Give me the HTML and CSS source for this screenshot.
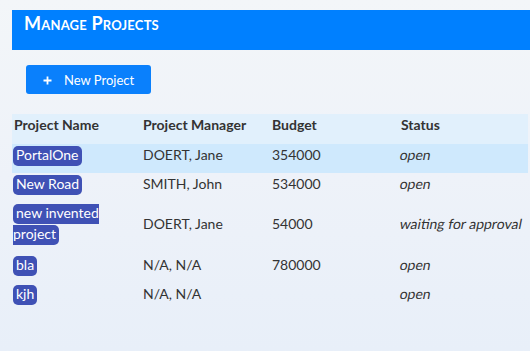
FILE: index.html
```html
<!DOCTYPE html>
<html lang="en">
<head>
<meta charset="utf-8">
<title>Manage Projects</title>
<link rel="stylesheet" href="styles.css">
</head>
<body>
<div class="page">
  <header class="title-bar">
    <h1 class="title">Manage Projects</h1>
  </header>
  <div class="toolbar">
    <button class="btn-new" type="button">
      <svg class="plus" width="9" height="9" viewBox="0 0 9 9" aria-hidden="true"><path d="M4.5 0.5v8M0.5 4.5h8" stroke="#fff" stroke-width="1.8" fill="none"/></svg>
      <span>New Project</span>
    </button>
  </div>
  <table class="projects">
    <colgroup>
      <col class="col"><col class="col"><col class="col"><col class="col">
    </colgroup>
    <thead>
      <tr><th>Project Name</th><th>Project Manager</th><th>Budget</th><th>Status</th></tr>
    </thead>
    <tbody>
      <tr class="selected"><td><span class="pill">PortalOne</span></td><td>DOERT, Jane</td><td>354000</td><td><span class="status">open</span></td></tr>
      <tr><td><span class="pill">New Road</span></td><td>SMITH, John</td><td>534000</td><td><span class="status">open</span></td></tr>
      <tr class="tall"><td><span class="pill">new invented project</span></td><td>DOERT, Jane</td><td>54000</td><td><span class="status">waiting for approval</span></td></tr>
      <tr><td><span class="pill">bla</span></td><td>N/A, N/A</td><td>780000</td><td><span class="status">open</span></td></tr>
      <tr><td><span class="pill">kjh</span></td><td>N/A, N/A</td><td></td><td><span class="status">open</span></td></tr>
    </tbody>
  </table>
</div>
</body>
</html>
```

FILE: styles.css
```css
html, body {
  margin: 0;
  height: 100%;
}
body {
  background: linear-gradient(180deg, #f3f6f9 0%, #eef2f9 50%, #e8eff9 100%);
  font-family: Lato, "Open Sans", "Liberation Sans", sans-serif;
  color: #333;
  overflow: hidden;
}
.page {
  padding: 10px 0 0 12px;
}
.title-bar {
  background: #0080ff;
  height: 40px;
  box-sizing: border-box;
  padding: 2px 13px 0 12px;
}
.title {
  margin: 0;
  font-size: 18px;
  line-height: 22px;
  font-weight: 700;
  font-variant: small-caps;
  color: #fff;
  letter-spacing: 0.2px;
}
.toolbar {
  padding: 15px 0 0 14px;
}
.btn-new {
  display: flex;
  align-items: center;
  gap: 12px;
  width: 125px;
  height: 29px;
  box-sizing: border-box;
  padding: 0 0 0 17px;
  border: none;
  border-radius: 3px;
  background: #0a80fc;
  color: #fff;
  font-family: Lato, "Open Sans", sans-serif;
  font-size: 13px;
  line-height: 16px;
}
.plus {
  display: block;
  margin-top: 2px;
}
.projects {
  margin-top: 20px;
  width: 516px;
  table-layout: fixed;
  border-collapse: collapse;
  font-size: 14px;
  line-height: 21px;
}
.col {
  width: 129px;
}
.projects th {
  background: #e1f0fc;
  text-align: left;
  font-weight: 700;
  color: #333;
  padding: 0 2px 9px;
  vertical-align: top;
}
.projects td {
  padding: 0 2px 8px;
  vertical-align: middle;
  color: #333;
  white-space: normal;
}
.projects td:first-child {
  padding-left: 1px;
}
.projects tr.tall td {
  padding-bottom: 10px;
}
.projects tr.selected td {
  background: #cfe9fd;
}
.status {
  display: inline-block;
  white-space: nowrap;
  margin-left: -1px;
  transform: skewX(-11deg);
  transform-origin: 0 50%;
}
.pill {
  background: #3f51b5;
  color: #fff;
  padding: 0 3px 3px;
  border-radius: 5px;
}
```
